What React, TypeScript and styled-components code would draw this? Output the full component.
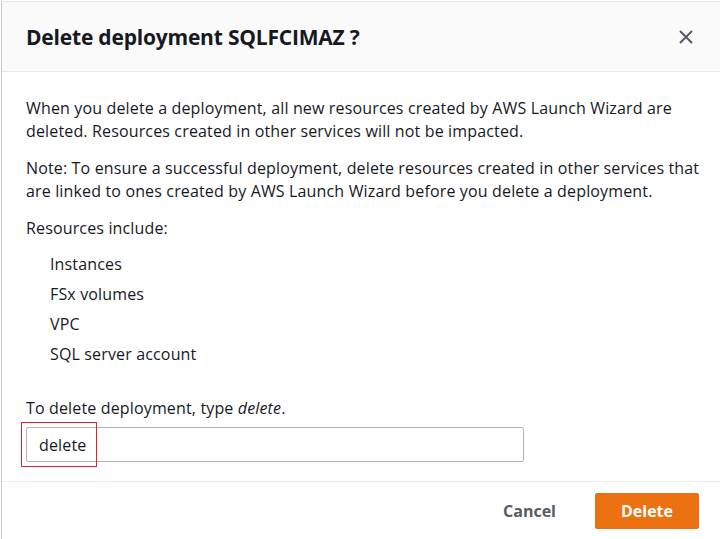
import styled, { createGlobalStyle } from "styled-components";

const GlobalStyle = createGlobalStyle`
  html, body {
    margin: 0;
    padding: 0;
    background: #ffffff;
  }
  body {
    font-family: "Open Sans", "Noto Sans", Arial, sans-serif;
    color: #16191f;
  }
`;

const Modal = styled.div`
  margin: 1px 0 0 1px;
  width: 719px;
  height: 538px;
  box-sizing: border-box;
  border-left: 1px solid #c6cbcc;
  border-top: 1px solid #e4e7e7;
  display: flex;
  flex-direction: column;
  background: #fff;
`;

const Header = styled.div`
  height: 70px;
  flex-shrink: 0;
  box-sizing: border-box;
  background: #fafafa;
  border-bottom: 1px solid #e6eaea;
  display: flex;
  align-items: center;
  justify-content: space-between;
  padding: 0 22px 0 24px;
`;

const Title = styled.h2`
  margin: 0;
  font-size: 21px;
  font-weight: 700;
  letter-spacing: -0.2px;
  color: #16191f;
`;

const CloseButton = styled.button`
  border: none;
  background: none;
  padding: 0;
  width: 24px;
  height: 24px;
  display: flex;
  align-items: center;
  justify-content: center;
  color: #545b64;
  cursor: pointer;
`;

const Body = styled.div`
  padding: 25px 12px 0 24px;
  flex: 1;
  font-size: 16px;
  line-height: 23px;
  letter-spacing: 0.15px;
`;

const Para = styled.p<{ $tight?: boolean }>`
  margin: 0 0 ${(p) => (p.$tight ? "0" : "14px")} 0;
`;

const List = styled.ul`
  list-style: none;
  margin: 0;
  padding: 9px 0 0 24px;
`;

const Item = styled.li`
  line-height: 30px;
`;

const Label = styled.p`
  margin: 28px 0 7px 0;
`;

const InputWrap = styled.div`
  position: relative;
  width: 498px;
`;

const Input = styled.input`
  display: block;
  width: 100%;
  height: 35px;
  box-sizing: border-box;
  border: 1px solid #aab7b8;
  border-radius: 2px;
  padding: 0 12px;
  font-family: inherit;
  font-size: 16px;
  letter-spacing: 0.15px;
  color: #16191f;
  outline: none;
`;

const Highlight = styled.div`
  position: absolute;
  left: -5px;
  top: -5px;
  width: 74px;
  height: 43px;
  border: 1px solid #d9252f;
  pointer-events: none;
`;

const Footer = styled.div`
  flex-shrink: 0;
  box-sizing: border-box;
  border-top: 1px solid #eaeded;
  height: 58px;
  display: flex;
  align-items: center;
  justify-content: flex-end;
  gap: 18px;
  padding: 0 21px 0 0;
`;

const Button = styled.button<{ $primary?: boolean }>`
  font-family: inherit;
  font-size: 16px;
  font-weight: 700;
  height: 36px;
  border-radius: 2px;
  border: 1px solid ${(p) => (p.$primary ? "#ec7211" : "transparent")};
  background: ${(p) => (p.$primary ? "#ec7211" : "transparent")};
  color: ${(p) => (p.$primary ? "#ffffff" : "#545b64")};
  padding: ${(p) => (p.$primary ? "0 24px" : "0 20px")};
  min-width: ${(p) => (p.$primary ? "104px" : "auto")};
  cursor: pointer;
`;

export default function App() {
  return (
    <>
      <GlobalStyle />
      <Modal>
        <Header>
          <Title>Delete deployment SQLFCIMAZ ?</Title>
          <CloseButton aria-label="Close">
            <svg width="16" height="16" viewBox="0 0 16 16">
              <path d="M2 2l12 12M14 2L2 14" stroke="currentColor" strokeWidth="2" fill="none" />
            </svg>
          </CloseButton>
        </Header>
        <Body>
          <Para>
            When you delete a deployment, all new resources created by AWS Launch Wizard are deleted.
            Resources created in other services will not be impacted.
          </Para>
          <Para>
            Note: To ensure a successful deployment, delete resources created in other services that
            are linked to ones created by AWS Launch Wizard before you delete a deployment.
          </Para>
          <Para $tight>Resources include:</Para>
          <List>
            <Item>Instances</Item>
            <Item>FSx volumes</Item>
            <Item>VPC</Item>
            <Item>SQL server account</Item>
          </List>
          <Label>
            To delete deployment, type <em>delete</em>.
          </Label>
          <InputWrap>
            <Input defaultValue="delete" />
            <Highlight />
          </InputWrap>
        </Body>
        <Footer>
          <Button>Cancel</Button>
          <Button $primary>Delete</Button>
        </Footer>
      </Modal>
    </>
  );
}
